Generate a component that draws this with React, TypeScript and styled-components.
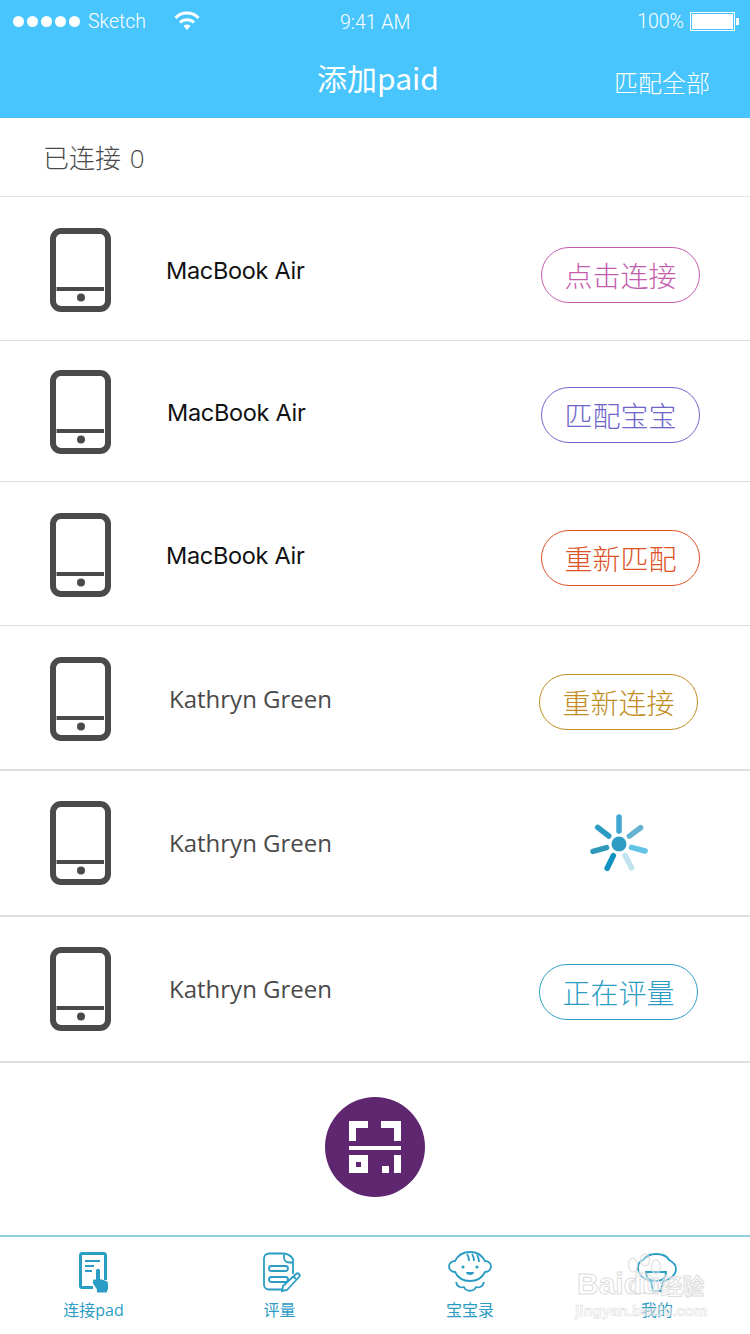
import React from "react";
import styled, { createGlobalStyle } from "styled-components";

const GlobalStyle = createGlobalStyle`
  html, body {
    margin: 0;
    padding: 0;
    background: #fff;
  }
  body {
    width: 750px;
    height: 1334px;
    overflow: hidden;
    font-family: "Open Sans", "Noto Sans CJK SC", sans-serif;
  }
`;

const devices = [
  { name: "MacBook Air", action: "点击连接", color: "#c45cae", height: 144, pad: 2, light: false, nameLeft: 166, nameDrop: 2, btnRight: 50, btnDrop: 10 },
  { name: "MacBook Air", action: "匹配宝宝", color: "#6f66cc", height: 141, pad: 2, light: false, nameLeft: 167, nameDrop: 0, btnRight: 50, btnDrop: 6 },
  { name: "MacBook Air", action: "重新匹配", color: "#dc5225", height: 144, pad: 2, light: false, nameLeft: 166, nameDrop: 2, btnRight: 50, btnDrop: 6 },
  { name: "Kathryn Green", action: "重新连接", color: "#c08d1e", height: 145, pad: 2, light: true, nameLeft: 169, nameDrop: 0, btnRight: 52, btnDrop: 6 },
  { name: "Kathryn Green", action: "", color: "", height: 146, pad: 0, light: true, nameLeft: 169, nameDrop: -2, btnRight: 52, btnDrop: 2 },
  { name: "Kathryn Green", action: "正在评量", color: "#2b9cc4", height: 146, pad: 0, light: true, nameLeft: 169, nameDrop: -2, btnRight: 52, btnDrop: 6 },
];

const PadIcon = () => (
  <svg width="62" height="84" viewBox="0 0 62 84">
    <rect x="3" y="3" width="55" height="78" rx="8" fill="none" stroke="#4a4a4a" strokeWidth="6" />
    <rect x="6.500" y="59" width="47.500" height="4" fill="#4a4a4a" />
    <circle cx="31" cy="69.500" r="4" fill="#4a4a4a" />
  </svg>
);

const Spinner = () => {
  const spokes = [
    { a: 0, c: "#3fa9cf" },
    { a: 53, c: "#62b2d0" },
    { a: 105, c: "#62c2e4" },
    { a: 152, c: "#c0e3ef" },
    { a: 206, c: "#0f93be" },
    { a: 254, c: "#2f98b9" },
    { a: 308, c: "#2a9cc4" },
  ];
  return (
    <svg width="64" height="64" viewBox="0 0 64 64">
      <circle cx="32" cy="32" r="7.500" fill="#2f9cc4" />
      {spokes.map((s) => (
        <line
          key={s.a}
          x1="32"
          y1="19"
          x2="32"
          y2="5"
          stroke={s.c}
          strokeWidth="5.500"
          strokeLinecap="round"
          transform={`rotate(${s.a} 32 32)`}
        />
      ))}
    </svg>
  );
};

const ScanIcon = () => (
  <svg width="52" height="52" viewBox="0 0 52 52" fill="#fff">
    <path d="M0 0h19v7H7v13H0z" />
    <path d="M32 0h20v20h-7V7H32z" />
    <rect x="0" y="25" width="52" height="4" />
    <path fillRule="evenodd" d="M0 34h19v18H0zM7 41v5h5v-5z" />
    <rect x="33" y="45" width="7" height="7" />
    <rect x="45" y="34" width="7" height="18" />
  </svg>
);

const ConnectIcon = () => (
  <svg width="32" height="42" viewBox="0 0 32 42">
    <path d="M14 35.500H3a1.500 1.500 0 0 1-1.500-1.500V3A1.500 1.500 0 0 1 3 1.500h22A1.500 1.500 0 0 1 26.500 3v25" fill="none" stroke="#2b9cc4" strokeWidth="3" />
    <path d="M6 9h15M6 14h9M6 19h7" stroke="#2b9cc4" strokeWidth="2" />
    <path d="M17 19c0-3 4-3 4 0v8l6 2c1.500.500 2 1.500 2 3v5l-1.500 3.500H18v-3l-4-6v-3c1-1.500 2-1.500 3-.500z" fill="#2b9cc4" />
  </svg>
);

const ReviewIcon = () => (
  <svg width="38" height="42" viewBox="0 0 38 42" fill="none" stroke="#2b9cc4" strokeWidth="1.800">
    <path d="M20 1.500H6a5 5 0 0 0-5 5v26a5 5 0 0 0 5 5h13" />
    <path d="M21 1.500v4a5 5 0 0 0 5 5h4V7c-2-3-5-5-9-5.500z" />
    <path d="M30 11v11" />
    <rect x="6" y="14" width="19" height="5" rx="2.500" />
    <rect x="6" y="25" width="19" height="5" rx="2.500" />
    <path d="M19 39l1-5 13-12c1-1 2-1 3 0s1 2 0 3L24 38z" />
    <path d="M30 24l3 3" />
  </svg>
);

const BabyIcon = () => (
  <svg width="44" height="44" viewBox="0 0 44 44" fill="none" stroke="#2b9cc4" strokeWidth="1.800">
    <path d="M7 10C10 4 15 1 22 1s12 3 15 9c3.500 0 6 2.500 6 5.500S40.500 21 37 21c-3 6-8 9-15 9S10 27 7 21c-3.500 0-6-2.500-6-5.500S3.500 10 7 10z" />
    <path d="M19 3c1.500 2 2 4 2 7M24 3c1.500 2 2 4 2 7M29 4c1.500 2 2 4 2 7" />
    <circle cx="15" cy="16" r="1.600" fill="#2b9cc4" stroke="none" />
    <circle cx="29" cy="16" r="1.600" fill="#2b9cc4" stroke="none" />
    <path d="M18 21h8c0 2-2 3-4 3s-4-1-4-3z" fill="#2b9cc4" stroke="none" />
    <path d="M8 31c1 5 5 6 8 5 2 5 10 5 12 0 3 1 7 0 8-5" />
  </svg>
);

const MineIcon = () => (
  <svg width="40" height="40" viewBox="0 0 40 40" fill="none" stroke="#2b9cc4" strokeWidth="1.800">
    <path d="M14 28C6 26 1 21 1 15c0-4 2-7 5-8 3-4 8-6 13-6 6 0 11 2 13 6 4 2 7 5 7 9 0 6-6 11-13 12" />
    <path d="M9 19h20c0 6-4 9-10 9S9 25 9 19z" />
    <path d="M14 28l2 10h8l2-10" />
  </svg>
);

const tabs = [
  { label: "连接pad", icon: <ConnectIcon />, nudge: 3 },
  { label: "评量", icon: <ReviewIcon />, nudge: 4 },
  { label: "宝宝录", icon: <BabyIcon />, nudge: 0 },
  { label: "我的", icon: <MineIcon />, nudge: 0 },
];

const App = () => {
  return (
    <Page>
      <GlobalStyle />
      <Header>
        <StatusBar>
          <Signal>
            <Dot />
            <Dot />
            <Dot />
            <Dot />
            <Dot />
          </Signal>
          <Carrier>Sketch</Carrier>
          <svg width="26" height="20" viewBox="0 0 26 20" fill="none" stroke="#fff" strokeWidth="3">
            <path d="M1.500 7a16 16 0 0 1 23 0" />
            <path d="M6 11.500a10 10 0 0 1 14 0" />
            <path d="M13 19l-3.500-4a5 5 0 0 1 7 0z" fill="#fff" stroke="none" />
          </svg>
          <Clock>9:41 AM</Clock>
          <Battery>
            100%
            <BatteryBody>
              <BatteryFill />
            </BatteryBody>
            <BatteryCap />
          </Battery>
        </StatusBar>
        <NavBar>
          <Title>添加paid</Title>
          <MatchAll>匹配全部</MatchAll>
        </NavBar>
      </Header>
      <Connected>已连接 0</Connected>
      {devices.map((d, i) => (
        <Row key={i} $height={d.height} $pad={d.pad} $strong={i >= 3}>
          <IconSlot>
            <PadIcon />
          </IconSlot>
          <Name $left={d.nameLeft} $drop={d.nameDrop} $light={d.light}>
            {d.name}
          </Name>
          <RowEnd $right={d.btnRight} $drop={d.btnDrop}>
            {d.action ? (
              <ActionButton $color={d.color}>{d.action}</ActionButton>
            ) : (
              <SpinnerSlot>
                <Spinner />
              </SpinnerSlot>
            )}
          </RowEnd>
        </Row>
      ))}
      <ScanArea>
        <ScanButton>
          <ScanIcon />
        </ScanButton>
      </ScanArea>
      <TabBar>
        {tabs.map((t) => (
          <Tab key={t.label}>
            <TabIcon $nudge={t.nudge}>{t.icon}</TabIcon>
            <TabLabel>{t.label}</TabLabel>
          </Tab>
        ))}
      </TabBar>
      <Watermark>
        <svg width="44" height="44" viewBox="0 0 44 44" fill="rgba(255,255,255,0.5)" stroke="#dcdcdc" strokeWidth="1.500">
          <ellipse cx="10" cy="12" rx="4.500" ry="7" />
          <ellipse cx="22" cy="7" rx="4.500" ry="6" />
          <ellipse cx="33" cy="14" rx="4.500" ry="7" />
          <path d="M21 20c6 0 14 9 14 16 0 6-8 5-14 4-6 1-13 2-13-4 0-7 7-16 13-16z" />
        </svg>
        <WatermarkBrand>
          Baidu<WatermarkCjk>经验</WatermarkCjk>
        </WatermarkBrand>
        <WatermarkUrl>jingyan.baidu.com</WatermarkUrl>
      </Watermark>
    </Page>
  );
};

export default App;

const Page = styled.div`
  width: 750px;
  height: 1334px;
  display: flex;
  flex-direction: column;
  background: #fff;
  overflow: hidden;
  position: relative;
`;
const Header = styled.div`
  height: 118px;
  background: #48c5fc;
  color: #fff;
  flex-shrink: 0;
`;
const StatusBar = styled.div`
  height: 42px;
  padding: 0 11px 0 13px;
  display: flex;
  align-items: center;
  position: relative;
  font-size: 19.500px;
  font-family: "Roboto", sans-serif;
  font-weight: 300;
`;
const Signal = styled.div`
  display: flex;
  gap: 3px;
  margin-right: 8px;
`;
const Dot = styled.span`
  width: 11px;
  height: 11px;
  border-radius: 50%;
  background: #fff;
`;
const Carrier = styled.span`
  margin-right: 28px;
`;
const Clock = styled.span`
  position: absolute;
  left: 340px;
  top: 11px;
`;
const Battery = styled.div`
  margin-left: auto;
  display: flex;
  align-items: center;
`;
const BatteryBody = styled.div`
  width: 45px;
  height: 19px;
  margin-left: 6px;
  border: 1px solid #fff;
  padding: 1px;
  box-sizing: border-box;
`;
const BatteryFill = styled.div`
  width: 100%;
  height: 100%;
  background: #fff;
`;
const BatteryCap = styled.div`
  width: 3px;
  height: 7px;
  margin-left: 1px;
  background: #fff;
`;
const NavBar = styled.div`
  height: 76px;
  position: relative;
  display: flex;
  justify-content: center;
  padding-left: 6px;
`;
const Title = styled.div`
  font-family: "Noto Sans CJK SC", sans-serif;
  font-size: 30px;
  line-height: 40px;
  margin-top: 15px;
  font-weight: 400;
`;
const MatchAll = styled.div`
  position: absolute;
  right: 40px;
  top: 26px;
  font-size: 24px;
  line-height: 30px;
  font-weight: 300;
`;
const Connected = styled.div`
  height: 78px;
  box-sizing: content-box;
  border-bottom: 1px solid #e2e2e2;
  padding-left: 43px;
  font-size: 26px;
  line-height: 80px;
  word-spacing: 2px;
  color: #4a4a4a;
  font-weight: 300;
  flex-shrink: 0;
`;
const Row = styled.div<{ $height: number; $pad: number; $strong: boolean }>`
  height: ${(p) => p.$height}px;
  padding-top: ${(p) => p.$pad}px;
  box-sizing: border-box;
  border-bottom: ${(p) => (p.$strong ? "2px solid #dedede" : "1px solid #dedede")};
  display: flex;
  align-items: center;
  flex-shrink: 0;
`;
const IconSlot = styled.div`
  width: 62px;
  margin-left: 50px;
  display: flex;
`;
const Name = styled.div<{ $left: number; $drop: number; $light: boolean }>`
  margin-left: ${(p) => p.$left - 112}px;
  margin-top: ${(p) => p.$drop}px;
  font-size: ${(p) => (p.$light ? "24px" : "23.500px")};
  font-family: ${(p) => (p.$light ? '"Open Sans"' : '"Inter"')}, sans-serif;
  color: ${(p) => (p.$light ? "#4a4a4a" : "#111")};
  letter-spacing: ${(p) => (p.$light ? "0" : "-0.3px")};
`;
const RowEnd = styled.div<{ $right: number; $drop: number }>`
  margin-left: auto;
  margin-right: ${(p) => p.$right}px;
  margin-top: ${(p) => p.$drop}px;
  display: flex;
`;
const ActionButton = styled.div<{ $color: string }>`
  width: 159px;
  height: 56px;
  box-sizing: border-box;
  border: 1px solid ${(p) => p.$color};
  border-radius: 28px;
  color: ${(p) => p.$color};
  font-size: 28px;
  font-weight: 200;
  display: flex;
  align-items: center;
  justify-content: center;
`;
const SpinnerSlot = styled.div`
  width: 159px;
  display: flex;
  justify-content: center;
`;
const ScanArea = styled.div`
  height: 172px;
  display: flex;
  justify-content: center;
  padding-top: 34px;
  box-sizing: border-box;
  flex-shrink: 0;
`;
const ScanButton = styled.div`
  width: 100px;
  height: 100px;
  border-radius: 50%;
  background: #5e2770;
  display: flex;
  align-items: center;
  justify-content: center;
`;
const TabBar = styled.div`
  flex: 1;
  border-top: 2px solid #8fcfe2;
  display: grid;
  grid-template-columns: 187px 185px 196px 178px;
`;
const Tab = styled.div`
  display: flex;
  flex-direction: column;
  align-items: center;
  padding-top: 14px;
`;
const TabIcon = styled.div<{ $nudge: number }>`
  height: 44px;
  margin-left: ${(p) => p.$nudge}px;
  display: flex;
  align-items: center;
`;
const TabLabel = styled.div`
  font-size: 16px;
  line-height: 20px;
  margin-top: 5px;
  color: #2b9cc4;
`;
const Watermark = styled.div`
  position: absolute;
  left: 575px;
  top: 1253px;
  width: 136px;
  height: 66px;
  pointer-events: none;
  svg {
    position: absolute;
    left: 48px;
    top: 0;
    opacity: 0.7;
  }
`;
const WatermarkBrand = styled.div`
  position: absolute;
  left: 2px;
  top: 15px;
  font-family: "Liberation Sans", sans-serif;
  font-weight: 700;
  font-size: 30px;
  line-height: 32px;
  white-space: nowrap;
  color: rgba(255, 255, 255, 0.4);
  -webkit-text-stroke: 1px #dddddd;
`;
const WatermarkCjk = styled.span`
  font-family: "Noto Sans CJK SC", sans-serif;
  font-size: 22px;
`;
const WatermarkUrl = styled.div`
  position: absolute;
  left: 0;
  top: 49px;
  font-family: "Liberation Sans", sans-serif;
  font-weight: 700;
  font-size: 15.100px;
  line-height: 18px;
  white-space: nowrap;
  color: rgba(255, 255, 255, 0.4);
  -webkit-text-stroke: 0.6px #dddddd;
`;
